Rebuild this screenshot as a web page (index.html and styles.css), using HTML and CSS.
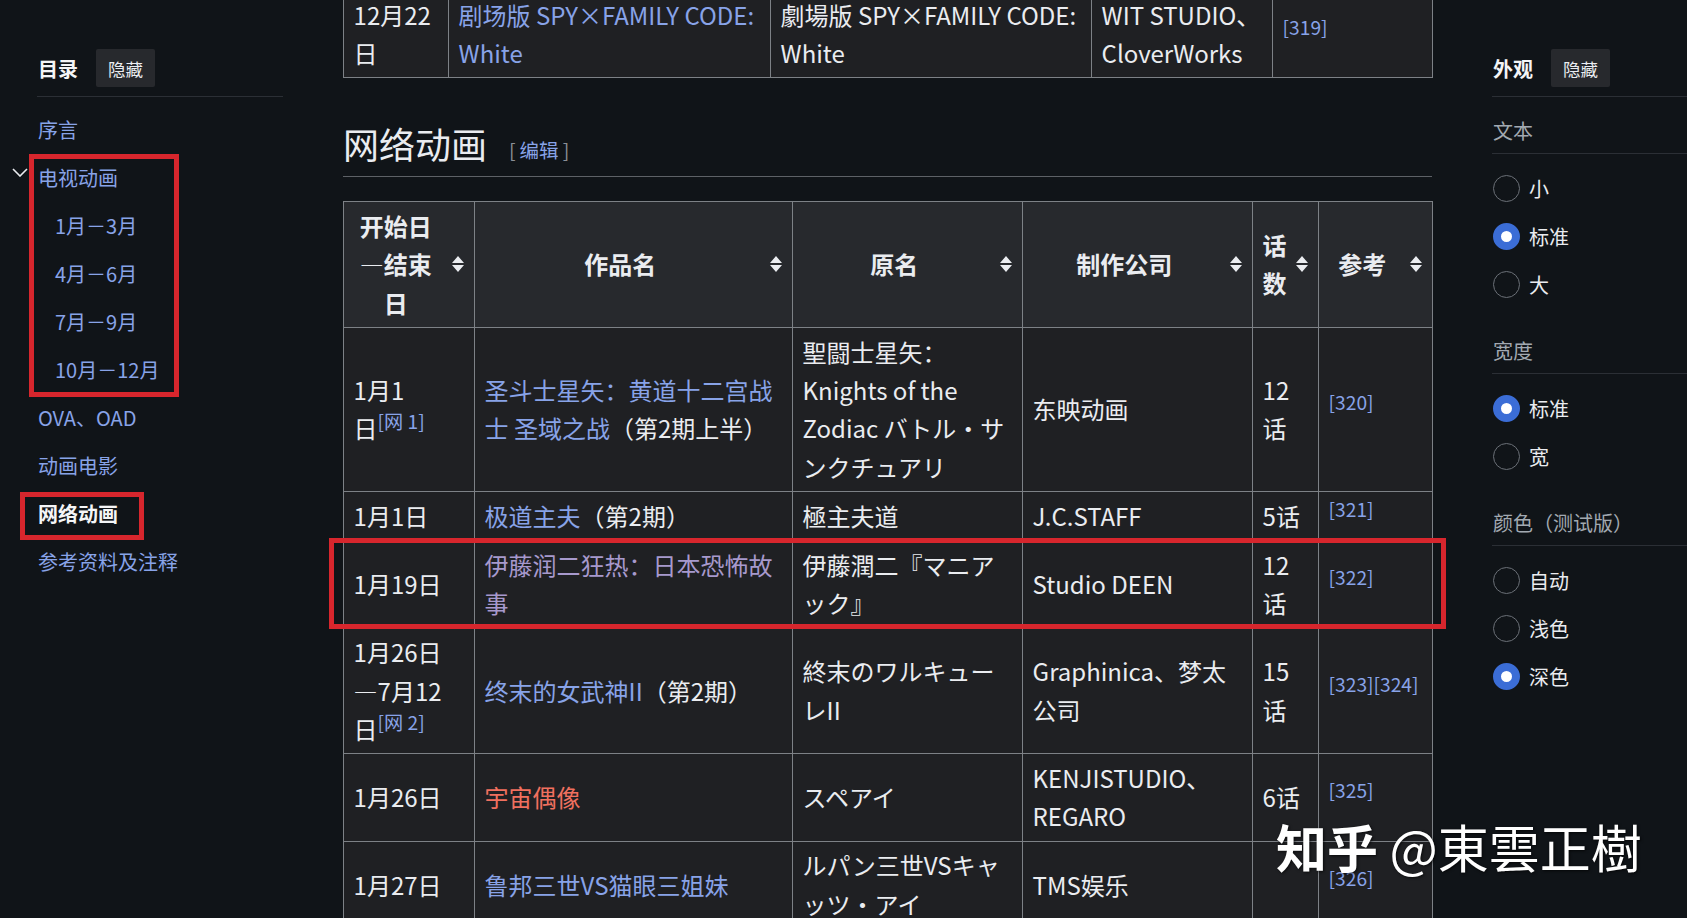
FILE: index.html
```html
<!DOCTYPE html>
<html lang="zh">
<head>
<meta charset="utf-8">
<title>网络动画</title>
<link rel="stylesheet" href="styles.css">
</head>
<body>
<div class="page">
  <aside class="toc">
    <div class="side-head">
      <span class="side-title">目录</span>
      <button class="hide-btn">隐藏</button>
    </div>
    <ul class="toc-list">
      <li><a href="#">序言</a></li>
      <li class="toc-parent">
        <span class="toggle"><svg width="16" height="9" viewBox="0 0 16 9"><path d="M1 1l7 7 7-7" fill="none" stroke="#eaecf0" stroke-width="1.6"/></svg></span>
        <a href="#">电视动画</a>
        <ul class="toc-sub">
          <li><a href="#">1月－3月</a></li>
          <li><a href="#">4月－6月</a></li>
          <li><a href="#">7月－9月</a></li>
          <li><a href="#">10月－12月</a></li>
        </ul>
      </li>
      <li><a href="#">OVA、OAD</a></li>
      <li><a href="#">动画电影</a></li>
      <li class="current">网络动画</li>
      <li><a href="#">参考资料及注释</a></li>
    </ul>
  </aside>

  <main class="content">
    <table class="wikitable top-table">
      <colgroup><col class="c-105"><col class="c-322"><col class="c-321"><col class="c-181"><col class="c-160"></colgroup>
      <tr>
        <td>12月22日</td>
        <td><a href="#">剧场版 SPY×FAMILY CODE: White</a></td>
        <td>劇場版 SPY×FAMILY CODE: White</td>
        <td>WIT STUDIO、CloverWorks</td>
        <td><sup class="ref"><a href="#">[319]</a></sup></td>
      </tr>
    </table>

    <h2 class="section-title">网络动画<span class="edit"><span class="br">[</span><a href="#">编辑</a><span class="br">]</span></span></h2>

    <table class="wikitable main-table">
      <colgroup><col class="c-131"><col class="c-318"><col class="c-230"><col class="c-230"><col class="c-66"><col class="c-114"></colgroup>
      <tr>
        <th>开始日<br>—结束<br>日</th>
        <th>作品名</th>
        <th>原名</th>
        <th>制作公司</th>
        <th>话数</th>
        <th>参考</th>
      </tr>
      <tr>
        <td>1月1<br>日<sup class="ref"><a href="#">[网 1]</a></sup></td>
        <td><a href="#">圣斗士星矢：黄道十二宫战士 圣域之战</a>（第2期上半）</td>
        <td>聖闘士星矢：Knights of the Zodiac バトル・サンクチュアリ</td>
        <td>东映动画</td>
        <td>12话</td>
        <td><sup class="ref"><a href="#">[320]</a></sup></td>
      </tr>
      <tr>
        <td>1月1日</td>
        <td><a href="#">极道主夫</a>（第2期）</td>
        <td>極主夫道</td>
        <td>J.C.STAFF</td>
        <td>5话</td>
        <td><sup class="ref"><a href="#">[321]</a></sup></td>
      </tr>
      <tr>
        <td>1月19日</td>
        <td><a href="#" class="visited">伊藤润二狂热：日本恐怖故事</a></td>
        <td>伊藤潤二『マニアック』</td>
        <td>Studio DEEN</td>
        <td>12话</td>
        <td><sup class="ref"><a href="#">[322]</a></sup></td>
      </tr>
      <tr>
        <td>1月26日<br>—7月12<br>日<sup class="ref"><a href="#">[网 2]</a></sup></td>
        <td><a href="#">终末的女武神II</a>（第2期）</td>
        <td>終末のワルキューレII</td>
        <td>Graphinica、梦太公司</td>
        <td>15话</td>
        <td><sup class="ref"><a href="#">[323]</a></sup><sup class="ref"><a href="#">[324]</a></sup></td>
      </tr>
      <tr>
        <td>1月26日</td>
        <td><a href="#" class="new">宇宙偶像</a></td>
        <td>スペアイ</td>
        <td>KENJISTUDIO、REGARO</td>
        <td>6话</td>
        <td><sup class="ref"><a href="#">[325]</a></sup></td>
      </tr>
      <tr>
        <td>1月27日</td>
        <td><a href="#">鲁邦三世VS猫眼三姐妹</a></td>
        <td>ルパン三世VSキャ<br>ッツ・アイ</td>
        <td>TMS娱乐</td>
        <td></td>
        <td><sup class="ref"><a href="#">[326]</a></sup></td>
      </tr>
    </table>
  </main>

  <aside class="appearance">
    <div class="side-head">
      <span class="side-title">外观</span>
      <button class="hide-btn">隐藏</button>
    </div>
    <div class="opt-section">
      <div class="opt-label">文本</div>
      <div class="radios">
        <label class="radio"><span class="dot"></span>小</label>
        <label class="radio"><span class="dot on"></span>标准</label>
        <label class="radio"><span class="dot"></span>大</label>
      </div>
    </div>
    <div class="opt-section">
      <div class="opt-label">宽度</div>
      <div class="radios">
        <label class="radio"><span class="dot on"></span>标准</label>
        <label class="radio"><span class="dot"></span>宽</label>
      </div>
    </div>
    <div class="opt-section">
      <div class="opt-label">颜色（测试版）</div>
      <div class="radios">
        <label class="radio"><span class="dot"></span>自动</label>
        <label class="radio"><span class="dot"></span>浅色</label>
        <label class="radio"><span class="dot on"></span>深色</label>
      </div>
    </div>
  </aside>
</div>

<div class="mark mark-toc"></div>
<div class="mark mark-current"></div>
<div class="mark mark-row"></div>

<div class="watermark"><span class="zh">知乎</span> @東雲正樹</div>
</body>
</html>
```

FILE: styles.css
```css
html, body {
  margin: 0;
  padding: 0;
  height: 918px;
  overflow: hidden;
}

body {
  position: relative;
  background: #101418;
  color: #eaecf0;
  font-family: "Noto Sans CJK SC", "Noto Sans", sans-serif;
}

a {
  color: #88a3e8;
  text-decoration: none;
}

ul {
  list-style: none;
  margin: 0;
  padding: 0;
}

.page {
  display: flex;
  align-items: flex-start;
  padding-left: 37px;
  gap: 60px;
}

/* ---------- side columns ---------- */
.toc {
  width: 246px;
  flex: none;
  padding-top: 49px;
}

.appearance {
  flex: 1;
  padding-top: 49px;
}

.side-head {
  display: flex;
  align-items: center;
  gap: 18px;
  height: 38px;
  padding-bottom: 9px;
  border-bottom: 1px solid #2b2f35;
  padding-left: 1px;
}

.side-title {
  font-size: 20px;
  font-weight: 700;
  color: #f4f5f7;
}

.hide-btn {
  height: 38px;
  padding: 0 12px;
  border: none;
  border-radius: 2px;
  background: #27292d;
  color: #eaecf0;
  font-family: inherit;
  font-size: 17.5px;
}

.toc-list {
  padding-top: 9px;
  padding-left: 1px;
  font-size: 20px;
  line-height: 48px;
}

.toc-parent {
  position: relative;
}

.toggle {
  position: absolute;
  left: -26px;
  top: 14px;
  display: flex;
}

.toc-sub {
  padding-left: 17px;
}

.toc-list .current {
  font-weight: 700;
  color: #f4f5f7;
}

/* ---------- appearance ---------- */
.opt-section {
  padding-top: 12px;
}

.opt-label {
  font-size: 20px;
  line-height: 44px;
  color: #a2a9b1;
  border-bottom: 1px solid #2b2f35;
  padding-left: 1px;
}

.radios {
  padding: 10px 0 9px 1px;
}

.radio {
  display: flex;
  align-items: center;
  gap: 9px;
  height: 48px;
  font-size: 20px;
  color: #eaecf0;
}

.dot {
  box-sizing: border-box;
  width: 27px;
  height: 27px;
  border-radius: 50%;
  border: 1.5px solid #6b7077;
  flex: none;
}

.dot.on {
  border: 8.5px solid #3b6dd6;
  background: #ffffff;
}

/* ---------- content ---------- */
.content {
  width: 1089px;
  flex: none;
  margin-top: -10px;
}

.wikitable {
  border-collapse: collapse;
  table-layout: fixed;
  width: 1089px;
  background: #1f2023;
  color: #eaecf0;
  font-size: 24px;
  line-height: 38.4px;
  border: 1px solid #7d8186;
}

.wikitable th,
.wikitable td {
  border: 1px solid #7d8186;
  padding: 4.8px 9.6px;
  text-align: left;
  vertical-align: middle;
}

.wikitable th {
  background-color: #27292d;
  font-weight: 700;
  text-align: center;
  padding-right: 36px;
  background-image: url("data:image/svg+xml,%3Csvg xmlns='http://www.w3.org/2000/svg' width='12' height='16' viewBox='0 0 12 16'%3E%3Cpath d='M6 0L12 7H0z M0 9H12L6 16z' fill='%23eaecf0'/%3E%3C/svg%3E");
  background-repeat: no-repeat;
  background-position: right 10px center;
}

.c-105 { width: 105px; }
.c-322 { width: 322px; }
.c-321 { width: 321px; }
.c-181 { width: 181px; }
.c-160 { width: 160px; }
.c-131 { width: 131px; }
.c-318 { width: 318px; }
.c-230 { width: 230px; }
.c-66 { width: 66px; }
.c-114 { width: 114px; }

.ref {
  font-size: 80%;
  line-height: 1;
  vertical-align: super;
  font-weight: 400;
}

a.visited {
  color: #a799cd;
}

a.new {
  color: #f0705f;
}

.section-title {
  margin: 43px 0 0;
  padding-bottom: 3px;
  font-size: 36px;
  font-weight: 400;
  line-height: 45.5px;
  color: #eaecf0;
  border-bottom: 1px solid #5d6166;
}

.edit {
  font-size: 19.5px;
  margin-left: 18px;
  vertical-align: 1px;
}

.edit .br {
  color: #8a8f96;
  margin: 0 4px;
}

.main-table {
  margin-top: 24px;
}

/* ---------- annotation overlays ---------- */
.mark {
  position: absolute;
  box-sizing: border-box;
  border: 5px solid #d7262d;
}

.mark-toc {
  left: 29px;
  top: 154px;
  width: 150px;
  height: 243px;
}

.mark-current {
  left: 20px;
  top: 492px;
  width: 124px;
  height: 48px;
}

.mark-row {
  left: 329px;
  top: 538px;
  width: 1117px;
  height: 91px;
}

.watermark {
  position: absolute;
  left: 1276px;
  top: 816px;
  font-size: 51px;
  line-height: 60px;
  color: #ffffff;
  white-space: nowrap;
  text-shadow: 1px 1px 3px rgba(0, 0, 0, 0.7);
}

.watermark .zh {
  font-weight: 700;
}
```
